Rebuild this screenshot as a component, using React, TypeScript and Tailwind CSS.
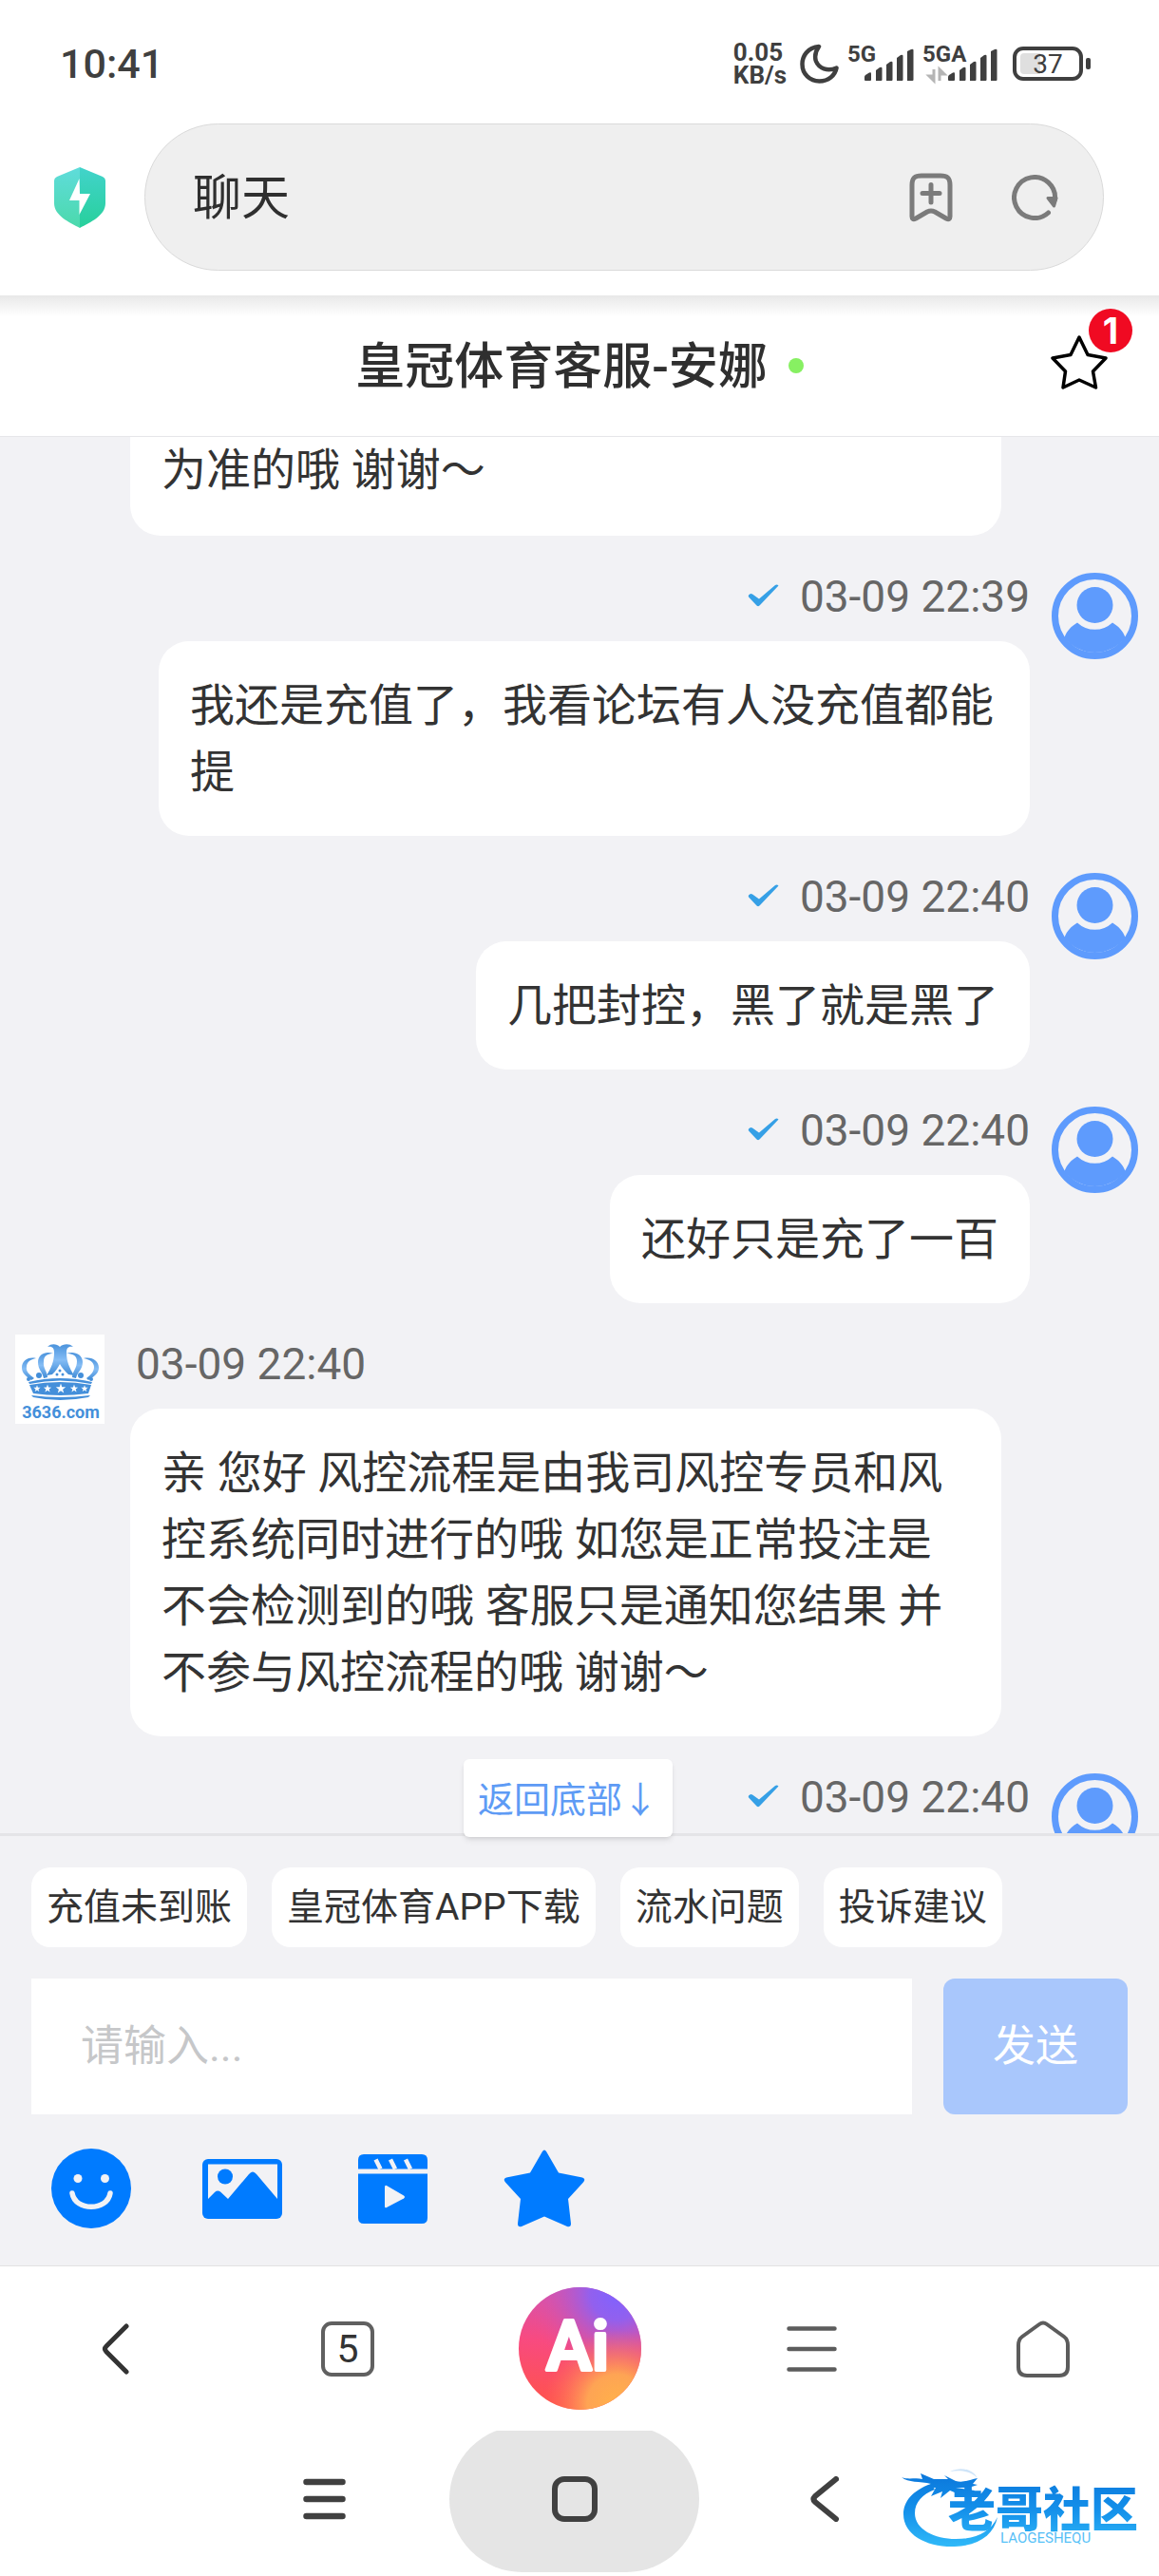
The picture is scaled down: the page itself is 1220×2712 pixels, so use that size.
import { ReactNode } from "react";

type Message = {
  id: number;
  from: "agent" | "me";
  time: string;
  text: string;
};

const messages: Message[] = [
  { id: 1, from: "me", time: "03-09 22:39", text: "我还是充值了，我看论坛有人没充值都能提" },
  { id: 2, from: "me", time: "03-09 22:40", text: "几把封控，黑了就是黑了" },
  { id: 3, from: "me", time: "03-09 22:40", text: "还好只是充了一百" },
  {
    id: 4,
    from: "agent",
    time: "03-09 22:40",
    text: "亲 您好 风控流程是由我司风控专员和风控系统同时进行的哦 如您是正常投注是不会检测到的哦 客服只是通知您结果 并不参与风控流程的哦 谢谢～",
  },
  { id: 5, from: "me", time: "03-09 22:40", text: "" },
];

const quickReplies = ["充值未到账", "皇冠体育APP下载", "流水问题", "投诉建议"];

const SignalBars = ({ x }: { x: number }) => (
  <g fill="#3f3f3f">
    <path d={`M${x} 38 v-3 q0 -1 1 -2 l4 -2.500 q2 -1 2 1 v6.500 q0 1 -1 1 h-5 q-1 0 -1 -1z`} />
    <path d={`M${x + 12} 39 v-11 l4 -3 q2.500 -1 2.500 1 v12 q0 1 -1 1z`} />
    <path d={`M${x + 23} 39 v-17 l4 -3 q2.500 -1 2.500 1 v18 q0 1 -1 1z`} />
    <path d={`M${x + 34} 39 v-24 l4 -3 q2.500 -1 2.500 1 v25 q0 1 -1 1z`} />
    <path d={`M${x + 45} 39 v-31 l4 -2 q2.500 -1 2.500 1 v31 q0 1 -1 1z`} />
  </g>
);

const StatusBar = () => (
  <div className="flex h-[130px] items-center justify-between pt-1 pr-[72px] pl-[63px] text-[#3f3f3f]">
    <span className="text-[43px] leading-[50px] font-medium">10:41</span>
    <div className="flex items-center">
      <div className="mr-[14px] text-[26px] leading-[24px] font-bold">
        <div>0.05</div>
        <div>KB/s</div>
      </div>
      <svg className="mr-[9px]" width="41" height="42" viewBox="0 0 41 42" fill="none" stroke="#3f3f3f" strokeWidth="4.500" strokeLinejoin="round">
        <path d="M20 3C8 4 2.500 13 2.500 21.500C2.500 32 10.500 39.500 20.500 39.500C30 39.500 37 33.500 38.500 25.500C29 29.500 20 26 17 18.500C15 13 16.500 8 20 3Z" />
      </svg>
      <svg className="mr-[9px]" width="70" height="56" viewBox="0 -7 70 56">
        <text x="0" y="19" fontSize="24" fontWeight="700" fill="#3f3f3f">5G</text>
        <SignalBars x={18} />
      </svg>
      <svg className="mr-4" width="79" height="56" viewBox="0 -7 79 56">
        <text x="0" y="19" fontSize="24" fontWeight="700" fill="#3f3f3f">5GA</text>
        <g stroke="#b5b5b5" strokeWidth="3" fill="#b5b5b5">
          <path d="M12 27V39L7 34H12" />
          <path d="M18 39V27L23 32H18" />
        </g>
        <SignalBars x={27} />
      </svg>
      <svg width="82" height="42" viewBox="0 0 82 42">
        <rect x="2" y="5" width="70" height="32" rx="9" fill="none" stroke="#3f3f3f" strokeWidth="4" />
        <path d="M12 10H29V32H12Q8 32 8 28V14Q8 10 12 10Z" fill="#dfdfdf" />
        <rect x="77" y="15" width="5" height="12" rx="2" fill="#3f3f3f" />
        <text x="37" y="31" fontSize="28" textAnchor="middle" fill="#3f3f3f">37</text>
      </svg>
    </div>
  </div>
);

const AddressBar = () => (
  <div className="flex items-center pr-[58px] pb-[26px] pl-[57px]">
    <svg className="mr-[41px] shrink-0" width="54" height="64" viewBox="0 0 54 64">
      <defs>
        <linearGradient id="shieldLeft" x1="0" y1="0" x2="0" y2="1">
          <stop offset="0" stopColor="#5fdcdb" />
          <stop offset="1" stopColor="#4bd9ab" />
        </linearGradient>
        <linearGradient id="shieldRight" x1="0" y1="0" x2="0" y2="1">
          <stop offset="0" stopColor="#42d3cb" />
          <stop offset="1" stopColor="#27d09b" />
        </linearGradient>
      </defs>
      <path d="M27 0L3 10Q0 11.500 0 14V38C0 51 16 58 27 64Z" fill="url(#shieldLeft)" />
      <path d="M27 0L51 10Q54 11.500 54 14V38C54 51 38 58 27 64Z" fill="url(#shieldRight)" />
      <path d="M26.500 12L16 35H26.500V50L38 28H27Z" fill="#fff" />
    </svg>
    <div className="flex h-[155px] flex-1 items-center rounded-full border border-[#dadada] bg-[#efefef] pr-[47px] pl-[50px]">
      <input
        aria-label="地址栏"
        defaultValue="聊天"
        className="min-w-0 flex-1 bg-transparent pt-[3px] text-[51px] leading-[70px] text-[#2f2f2f] outline-none"
      />
      <button aria-label="添加书签" className="mr-[62px]">
        <svg width="46" height="52" viewBox="0 0 46 52" fill="none" stroke="#7b7b7b" strokeWidth="5" strokeLinecap="round" strokeLinejoin="round">
          <path d="M3 46V13C3 5 6 3 13 3H33C40 3 43 5 43 13V46Q43 50 39 48L27 41Q23 39 19 41L7 48Q3 50 3 46Z" />
          <path d="M23 12.500V31M14 21.500H32" />
        </svg>
      </button>
      <button aria-label="刷新">
        <svg width="49" height="48" viewBox="0 0 49 48" fill="none" stroke="#7b7b7b" strokeWidth="5" strokeLinecap="round">
          <path d="M38.500 40A21.500 21.500 0 1 1 45.500 26" />
          <path d="M38 24.500H47L44.500 33Z" fill="#7b7b7b" strokeWidth="3" strokeLinejoin="round" />
        </svg>
      </button>
    </div>
  </div>
);

const ChatHeader = () => (
  <header className="relative flex h-[149px] shrink-0 items-center justify-center border-b border-[#e6e6e9] bg-white">
    <div className="absolute inset-x-0 top-0 h-[22px] bg-linear-to-b from-[#e8e8e8] to-white" />
    <h1 className="pt-[3px] text-[52px] leading-[70px] font-medium text-[#2f2f2f]">皇冠体育客服-安娜</h1>
    <span className="ml-[22px] size-4 rounded-full bg-[#87f062]" />
    <button aria-label="收藏" className="absolute top-[40px] right-[54px]">
      <svg width="60" height="60" viewBox="0 0 60 60" fill="none" stroke="#000" strokeWidth="3.500" strokeLinejoin="round">
        <path d="M30 4L39 22.500L58 26L44.500 40L47.500 57L30 49L13 57L15.500 40L2 26L21 22.500Z" />
      </svg>
      <span className="absolute -top-[26px] -right-[26px] flex size-[46px] items-center justify-center rounded-full bg-[#f00a22] font-['Inter',sans-serif] text-[38px] leading-[46px] font-bold text-white">
        1
      </span>
    </button>
  </header>
);

const UserAvatar = () => (
  <svg className="shrink-0" width="91" height="91" viewBox="0 0 91 91">
    <circle cx="45.500" cy="45.500" r="42" fill="none" stroke="#5e9bfd" strokeWidth="7" />
    <circle cx="45.500" cy="34" r="19" fill="#5e9bfd" />
    <path d="M13.500 68C16 61 21 56 27 52.500A27 27 0 0 0 64 52.500C70 56 75 61 77.500 68A40 40 0 0 1 13.500 68Z" fill="#5e9bfd" />
  </svg>
);

const starPoints = "0,-5.500 1.300,-1.800 5.200,-1.700 2.100,0.700 3.200,4.400 0,2.200 -3.200,4.400 -2.100,0.700 -5.200,-1.700 -1.300,-1.800";

const AgentAvatar = () => (
  <svg className="shrink-0" width="94" height="94" viewBox="0 0 94 94">
    <defs>
      <linearGradient id="crown" x1="0" y1="0" x2="0" y2="1">
        <stop offset="0" stopColor="#4b93dc" />
        <stop offset="0.500" stopColor="#85bdf5" />
        <stop offset="1" stopColor="#3f8bd6" />
      </linearGradient>
    </defs>
    <rect width="94" height="94" fill="#fff" />
    <g fill="url(#crown)">
      <path d="M34 13C38 9 44 10 47 13C50 10 57 9 61 13C56 12 54 14 54 19C54 28 57 35 62 43L56 42C52 38 49 35 47 31C45 35 43 38 39 42L33 43C38 35 41 28 41 19C41 14 39 12 34 13Z" />
      <path d="M40 20C33 17 24 20 24 29C24 37 29 40 30 46L34 45C34 39 29 36 30 28C30 22 35 20 40 20Z" />
      <path d="M54 20C61 17 71 20 71 29C71 37 65 40 64 46L60 45C60 39 65 36 65 28C65 22 60 20 54 20Z" />
      <path d="M22 25C13 23 7 28 7 35C7 41 12 44 17 48L20 46C15 42 11 39 12 34C12 29 16 26 22 25Z" />
      <path d="M72 25C81 23 88 28 88 35C88 41 83 44 77 48L75 46C80 42 83 39 83 34C83 29 78 26 72 25Z" />
    </g>
    <g fill="#448fda">
      <circle cx="25" cy="43" r="3" />
      <circle cx="69" cy="43" r="3" />
      <circle cx="14" cy="47" r="2" />
      <circle cx="80" cy="47" r="2" />
      <circle cx="47" cy="38" r="1.500" />
      <circle cx="44" cy="42" r="1.500" />
      <circle cx="50" cy="42" r="1.500" />
      <path d="M14 50Q47 42 81 50L80 52Q47 45 15 52Z" />
      <path d="M15 53Q47 47 80 53L77 62Q47 66 19 62Z" />
      <path d="M17 64Q47 68 79 64L77 66Q47 72 19 66Z" />
    </g>
    <g fill="#fff">
      <polygon points={starPoints} transform="translate(23 57) scale(0.700)" />
      <polygon points={starPoints} transform="translate(34 57) scale(0.800)" />
      <polygon points={starPoints} transform="translate(48 57)" />
      <polygon points={starPoints} transform="translate(62 57) scale(0.800)" />
      <polygon points={starPoints} transform="translate(73 57) scale(0.700)" />
    </g>
    <text x="48" y="87.500" fontSize="18" fontWeight="700" textAnchor="middle" fill="#448fda" fontFamily="Roboto, sans-serif">3636.com</text>
  </svg>
);

const CheckMark = () => (
  <svg width="33" height="24" viewBox="0 0 33 24">
    <path d="M1 11.500Q3 9 5 10.500L12 15.500L29 1Q31 0 32.500 1.500L13 22Q11.500 24 9.500 22.500L2 14.500Q0 13 1 11.500Z" fill="#36a0e6" />
  </svg>
);

const Bubble = ({ children }: { children: ReactNode }) => (
  <div className="rounded-[32px] bg-white px-[33px] pt-[33px] pb-[32px] text-[47px] leading-[70px] text-[#333]">{children}</div>
);

const MessageRow = ({ message }: { message: Message }) => {
  if (message.from === "agent") {
    return (
      <div className="flex items-start pr-[166px] pl-4">
        <AgentAvatar />
        <div className="ml-[27px] flex min-w-0 flex-1 flex-col items-start">
          <time className="h-[78px] pl-[6px] text-[46px] leading-[62px] text-[#666]">{message.time}</time>
          <Bubble>{message.text}</Bubble>
        </div>
      </div>
    );
  }
  return (
    <div className="flex items-start pt-[6px] pr-[22px] pl-[167px]">
      <div className="mr-[23px] flex min-w-0 flex-1 flex-col items-end">
        <div className="flex h-[72px] items-start gap-[22px]">
          <span className="flex h-[48px] items-center">
            <CheckMark />
          </span>
          <time className="text-[46px] leading-[50px] text-[#666]">{message.time}</time>
        </div>
        {message.text && <Bubble>{message.text}</Bubble>}
      </div>
      <UserAvatar />
    </div>
  );
};

const ToolButton = ({ label, children }: { label: string; children: ReactNode }) => (
  <button aria-label={label} className="flex h-[156px] w-[159px] items-center justify-center">
    {children}
  </button>
);

const Composer = () => (
  <section className="relative shrink-0 border-t-[3px] border-[#e4e4e7] bg-[#f2f2f5] pb-[3px]">
    <button className="absolute -top-[81px] left-[40%] h-[82px] w-[220px] rounded-md bg-white text-[38px] leading-[50px] whitespace-nowrap text-[#5e9bf5] shadow-md">
      返回底部<span className="font-['Noto_Sans_CJK_SC']">↓</span>
    </button>
    <div className="flex gap-[26px] px-[33px] pt-[33px]">
      {quickReplies.map((reply) => (
        <button key={reply} className="h-[84px] rounded-[20px] bg-white px-4 text-[39px] leading-[50px] whitespace-nowrap text-[#333]">
          {reply}
        </button>
      ))}
    </div>
    <div className="flex gap-[33px] px-[33px] pt-[33px]">
      <input
        aria-label="消息"
        placeholder="请输入..."
        className="h-[143px] min-w-0 flex-1 bg-white px-[52px] text-[45px] text-[#333] outline-none placeholder:text-[#c6c7c9]"
      />
      <button className="h-[143px] w-[194px] rounded-[12px] bg-[#a9c7fc] text-[45px] text-white">发送</button>
    </div>
    <div className="flex pl-4">
      <ToolButton label="表情">
        <svg width="84" height="84" viewBox="0 0 84 84">
          <circle cx="42" cy="42" r="42" fill="#007bff" />
          <circle cx="28" cy="31.500" r="4.500" fill="#f2f2f5" />
          <circle cx="56.500" cy="31.500" r="4.500" fill="#f2f2f5" />
          <path d="M22 47C25 66 59 66 62 47" fill="none" stroke="#f2f2f5" strokeWidth="5.500" strokeLinecap="round" />
        </svg>
      </ToolButton>
      <ToolButton label="图片">
        <svg width="84" height="63" viewBox="0 0 84 63">
          <rect width="84" height="63" rx="6" fill="#007bff" />
          <path d="M6 5.500H79V42L57 16Q53 11 49 16L27 42L19 34.500Q16 32.500 13 35L6 42Z" fill="#f2f2f5" />
          <circle cx="24" cy="18.500" r="8" fill="#007bff" />
        </svg>
      </ToolButton>
      <ToolButton label="视频">
        <svg width="73" height="73" viewBox="0 0 73 73">
          <path d="M6 0H67Q73 0 73 6V15.500H0V6Q0 0 6 0ZM0 20.500H73V67Q73 73 67 73H6Q0 73 0 67Z" fill="#007bff" />
          <path d="M18.500 5.500L23.500 15.500M34 5.500L39 15.500M50 5.500L55 15.500" stroke="#f2f2f5" strokeWidth="4.500" />
          <path d="M28 34.500V55Q28 57 30 56L48 46.500Q50 45 48 43.500L30 33Q28 32 28 34.500Z" fill="#f2f2f5" />
        </svg>
      </ToolButton>
      <ToolButton label="评价">
        <svg width="86" height="82" viewBox="0 0 86 82">
          <path d="M41 2Q43 -1 45 2L58 24.500L83 29.500Q87 31 84 34.500L68 52L71 78Q71 82 67 81L43 70.500L19 81Q15 82 15 78L18 52L2 34.500Q-1 31 3 29.500L28 24.500Z" fill="#007bff" />
        </svg>
      </ToolButton>
    </div>
  </section>
);

const AiLogo = () => (
  <svg width="129" height="129" viewBox="0 0 129 129">
    <defs>
      <radialGradient id="aiPurple" cx="0.800" cy="0.050" r="0.720">
        <stop offset="0" stopColor="#7f62ff" />
        <stop offset="0.300" stopColor="#9260ee" />
        <stop offset="1" stopColor="#e8509b" stopOpacity="0" />
      </radialGradient>
      <radialGradient id="aiOrange" cx="0.800" cy="0.950" r="0.600">
        <stop offset="0" stopColor="#ffb14a" />
        <stop offset="0.400" stopColor="#fea454" />
        <stop offset="1" stopColor="#ff6a5c" stopOpacity="0" />
      </radialGradient>
      <linearGradient id="aiPink" x1="0.400" y1="0" x2="0.300" y2="1">
        <stop offset="0" stopColor="#d054b4" />
        <stop offset="0.450" stopColor="#f84a80" />
        <stop offset="1" stopColor="#ff5348" />
      </linearGradient>
    </defs>
    <circle cx="64.500" cy="64.500" r="64.500" fill="url(#aiPink)" />
    <circle cx="64.500" cy="64.500" r="64.500" fill="url(#aiPurple)" />
    <circle cx="64.500" cy="64.500" r="64.500" fill="url(#aiOrange)" />
    <text x="62" y="87" fontSize="72" fontWeight="500" textAnchor="middle" fill="#fff" stroke="#fff" strokeWidth="4" strokeLinejoin="round">
      Ai
    </text>
  </svg>
);

const BrowserNav = () => (
  <nav className="grid h-[174px] shrink-0 grid-cols-5 items-center justify-items-center border-t border-[#e2e2e2] bg-white">
    <button aria-label="后退">
      <svg width="30" height="54" viewBox="0 0 30 54" fill="none" stroke="#333" strokeWidth="5" strokeLinecap="round" strokeLinejoin="round">
        <path d="M26 3L5 24Q2 27 5 30L26 51" />
      </svg>
    </button>
    <button className="flex h-[58px] w-[56px] items-center justify-center rounded-[11px] border-4 border-[#606060] text-[41px] leading-[50px] text-[#333]">
      5
    </button>
    <button aria-label="AI 助手">
      <AiLogo />
    </button>
    <button aria-label="菜单">
      <svg width="53" height="48" viewBox="0 0 53 48" stroke="#5c5c5c" strokeWidth="4.500" strokeLinecap="round">
        <path d="M2.500 2.500H50.500M2.500 24H50.500M2.500 45.500H50.500" />
      </svg>
    </button>
    <button aria-label="主页">
      <svg width="56" height="60" viewBox="0 0 56 60" fill="none" stroke="#5c5c5c" strokeWidth="4" strokeLinejoin="round">
        <path d="M2 26Q2 20 6 17L24 4Q28 1 32 4L50 17Q54 20 54 26V49Q54 58 45 58H11Q2 58 2 49Z" />
      </svg>
    </button>
  </nav>
);

const CommunityMark = () => (
  <svg className="absolute right-[12px] bottom-[22px]" width="268" height="100" viewBox="0 0 268 100">
    <defs>
      <linearGradient id="mark" gradientUnits="userSpaceOnUse" x1="0" y1="15" x2="0" y2="90">
        <stop offset="0" stopColor="#0b78dc" />
        <stop offset="0.500" stopColor="#1490ea" />
        <stop offset="1" stopColor="#2fb8f8" />
      </linearGradient>
    </defs>
    <g fill="url(#mark)">
      <path d="M40 25C20 32 11 44 11 57C11 79 36 92 65 91C90 90 106 79 110 60C102 76 88 83 66 83C44 83 23 73 23 56C23 44 31 36 44 31Z" />
      <path d="M9 18C16 21 24 18 31 20L29 14L43 20L58 20L54 16L66 22C74 24 80 21 89 19L84 25L89 26L80 29L66 29L86 32L84 35L70 33L72 37L60 32L50 40L52 33L40 38L45 29L34 30L40 25C28 22 16 24 9 18Z" />
      <path d="M60 12C72 6 84 10 89 19C82 12 72 10 60 12Z" opacity="0.200" />
      <text x="58" y="70" fontSize="50" fontWeight="900">老哥社区</text>
      <text x="113" y="87" fontSize="15" opacity="0.800">LAOGESHEQU</text>
    </g>
  </svg>
);

const SystemNav = () => (
  <nav className="relative flex h-[153px] shrink-0 overflow-hidden bg-white pl-[210px]">
    <button aria-label="最近任务" className="flex h-[144px] w-[263px] items-center justify-center">
      <svg width="45" height="44" viewBox="0 0 45 44" stroke="#404040" strokeWidth="6.500" strokeLinecap="round">
        <path d="M3.500 4H41.500M3.500 22H41.500M3.500 40H41.500" />
      </svg>
    </button>
    <button aria-label="桌面" className="-mt-[5px] flex h-[154px] w-[263px] items-center justify-center rounded-full bg-[#e5e5e5]">
      <svg width="48" height="48" viewBox="0 0 48 48" fill="none" stroke="#404040" strokeWidth="6">
        <rect x="3" y="3" width="42" height="42" rx="10" />
      </svg>
    </button>
    <button aria-label="返回" className="flex h-[144px] w-[263px] items-center justify-center">
      <svg width="30" height="48" viewBox="0 0 30 48" fill="none" stroke="#404040" strokeWidth="6" strokeLinecap="round" strokeLinejoin="round">
        <path d="M27 3L5 21Q2 24 5 27L27 45" />
      </svg>
    </button>
    <CommunityMark />
  </nav>
);

const App = () => {
  return (
    <div className="flex h-screen flex-col overflow-hidden bg-white font-['Roboto','Noto_Sans_CJK_SC',sans-serif]">
      <div className="shrink-0">
        <StatusBar />
        <AddressBar />
      </div>
      <ChatHeader />
      <main className="flex min-h-0 flex-1 flex-col gap-[33px] overflow-hidden bg-[#f2f2f5]">
        {/* tail of the earlier reply, scrolled under the header */}
        <div className="mr-[166px] ml-[137px] rounded-b-[32px] bg-white px-[33px] pb-[34px] text-[47px] leading-[70px] text-[#333]">
          为准的哦 谢谢～
        </div>
        {messages.map((message) => (
          <MessageRow key={message.id} message={message} />
        ))}
      </main>
      <Composer />
      <BrowserNav />
      <SystemNav />
    </div>
  );
};

export default App;
